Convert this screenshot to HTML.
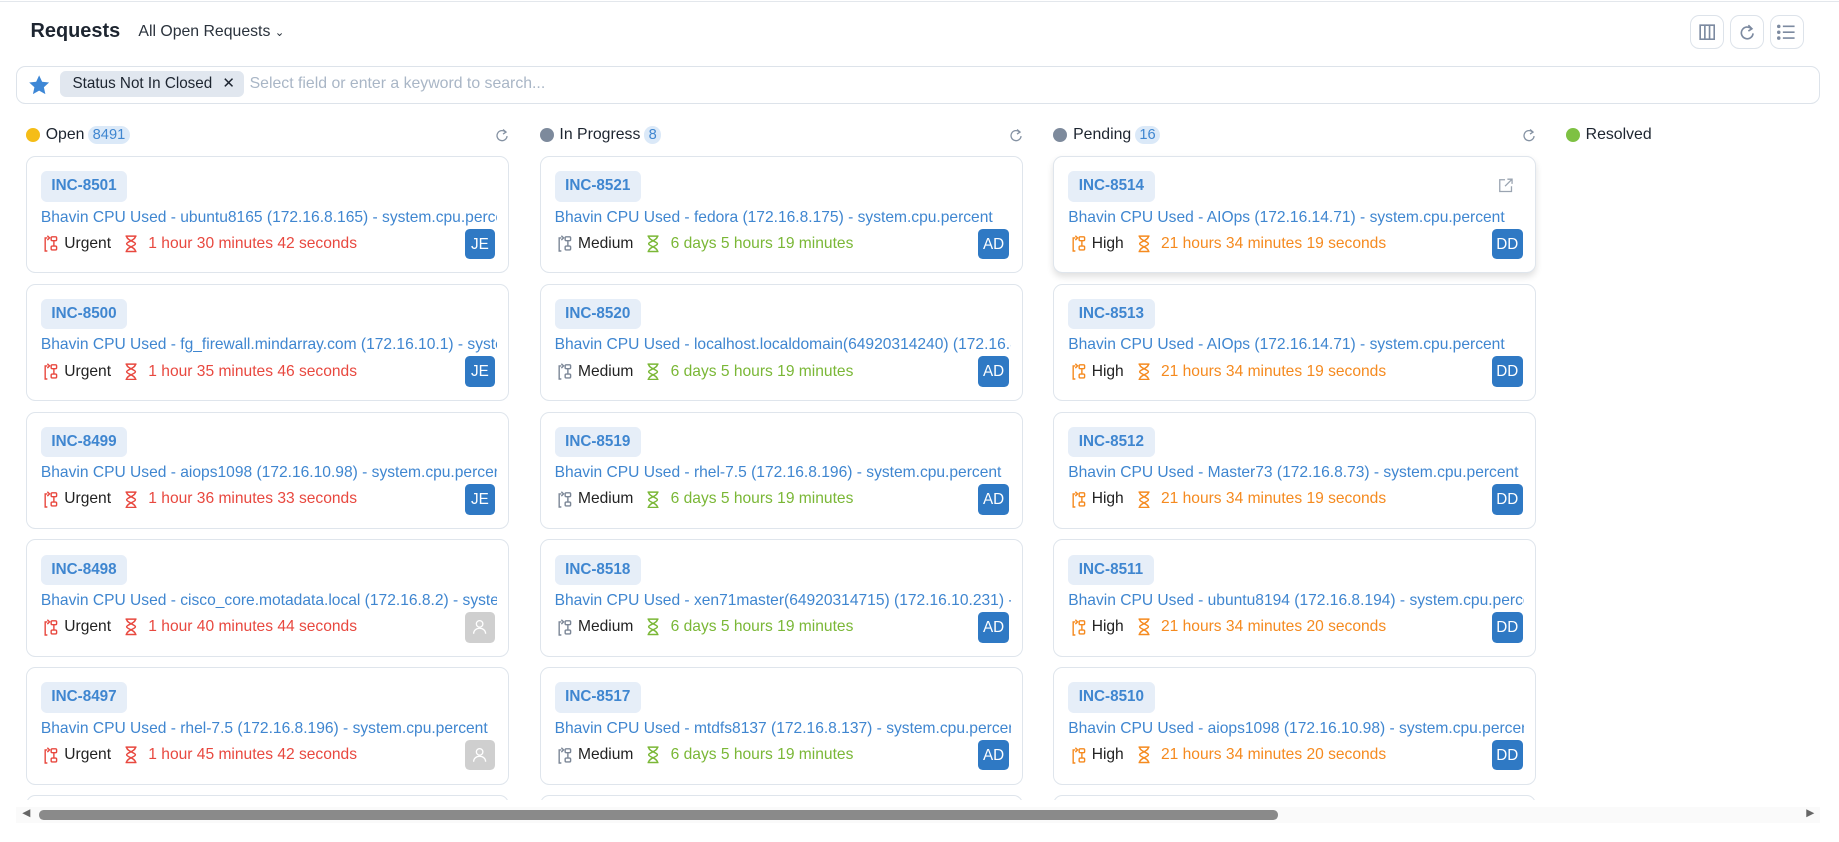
<!DOCTYPE html>
<html><head><meta charset="utf-8"><style>
html,body{margin:0;padding:0;overflow:hidden;background:#fff;height:842px}
body{width:1839px;height:842px;position:relative}
#w{zoom:1.17283;position:absolute;left:0;top:0;width:1568px;height:717px;font-family:"Liberation Sans",sans-serif;color:#222;overflow:hidden}
.top{position:absolute;left:0;right:0;top:1px;border-top:1px solid #e3e7ec}
.title{position:absolute;left:26px;top:17px;font-size:17px;font-weight:bold;color:#1d2530}
.view{position:absolute;left:118px;top:20px;font-size:13.5px;color:#2a323c}
.btn{position:absolute;top:13px;width:29px;height:29px;border:1px solid #dde3ea;border-radius:8px;box-sizing:border-box;display:flex;align-items:center;justify-content:center}
.search{position:absolute;left:14px;top:56px;width:1538px;height:33px;border:1px solid #dde3ea;border-radius:8px;box-sizing:border-box}
.chip{position:absolute;left:36px;top:4px;height:22px;width:157px;background:#e1e7ef;border-radius:5px;font-size:13px;line-height:22px;padding-left:11px;box-sizing:border-box;color:#1d2530}
.ph{position:absolute;left:198px;top:7px;font-size:13.5px;color:#a9b6c6}
.col{position:absolute;top:106px;width:412px}
.hd{height:18px;font-size:13.5px;display:flex;align-items:center;color:#1d2530}
.dot{width:12px;height:12px;border-radius:50%;margin-right:5px}
.bd{background:#dbe9f8;color:#3f86d0;border-radius:9px;padding:1px 4px;margin-left:3px;font-size:12.5px}
.rf{position:absolute;right:0;top:3px}
.card{position:absolute;left:0;width:412px;height:100px;border:1px solid #dfe5ec;border-radius:8px;box-sizing:border-box;background:#fff}
.id{position:absolute;left:12px;top:12px;height:26px;line-height:26px;padding:0 9px;background:#e6eef8;color:#3f86d0;border-radius:5px;font-size:13px;font-weight:bold}
.t{position:absolute;left:12px;top:44px;width:389px;white-space:nowrap;overflow:hidden;font-size:13.3px;color:#3f86d0}
.r{position:absolute;left:14px;top:66px;font-size:13.3px;display:flex;align-items:center;white-space:nowrap}
.r svg{margin-right:5px}
.av{position:absolute;right:11px;top:61px;width:26px;height:26px;border-radius:4px;background:#2f79c4;color:#fff;font-size:13px;line-height:27px;text-align:center}
.av.g{background:#cfcfcf}
.u{color:#e8483f}.m{color:#7ab736}.h{color:#f58a1f}
.sb{position:absolute;left:14px;top:688px;width:1538px;height:14px;background:#fafafa}
.th{position:absolute;left:19px;top:3px;width:1057px;height:8px;border-radius:4px;background:#8a8a8a}
</style></head><body><div id="w">
<div class="top"></div>
<div class="title">Requests</div>
<div class="view">All Open Requests <span style="font-size:10px">&#8964;</span></div>
<div class="btn" style="left:1441px"><svg width="14" height="14" viewBox="0 0 14 14" fill="none" stroke="#7c8aa0" stroke-width="1.4"><rect x="1" y="1" width="12" height="12"/><path d="M5 1v12M9 1v12"/></svg></div>
<div class="btn" style="left:1475px"><svg width="14" height="14" viewBox="0 0 14 14" fill="none" stroke="#7c8aa0" stroke-width="1.4"><path d="M10.5 4A5 5 0 1 0 12 8"/><path d="M8 1l3 3-3 2"/></svg></div>
<div class="btn" style="left:1509px"><svg width="16" height="14" viewBox="0 0 16 14" fill="none" stroke="#7c8aa0" stroke-width="1.4"><path d="M5 2h10M5 7h10M5 12h10"/><circle cx="1.5" cy="2" r=".8" fill="#7c8aa0"/><circle cx="1.5" cy="7" r=".8" fill="#7c8aa0"/><circle cx="1.5" cy="12" r=".8" fill="#7c8aa0"/></svg></div>
<div class="search">
<svg style="position:absolute;left:9px;top:6px" width="19" height="19" viewBox="0 0 24 24"><path fill="#3d87d6" d="M12 1.5l3.2 6.9 7.5.8-5.6 5.1 1.6 7.4L12 17.9l-6.7 3.8 1.6-7.4-5.6-5.1 7.5-.8z"/></svg>
<div class="chip">Status Not In Closed <span style="margin-left:5px">&#10005;</span></div>
<div class="ph">Select field or enter a keyword to search...</div>
</div>

<svg width="0" height="0" style="position:absolute"><defs>
<symbol id="pr" viewBox="0 0 14 16"><g fill="none" stroke-width="1.3"><path d="M4 3H2v12h2"/><path d="M4 1l2 2-2 2"/><rect x="7.5" y="2" width="5" height="3.5" rx="1"/><rect x="7.5" y="10.5" width="5" height="3.5" rx="1"/><path d="M10 5.5v5"/></g></symbol>
<symbol id="hg" viewBox="0 0 12 16"><g fill="none" stroke-width="1.3"><path d="M1 1h10M1 15h10M2 1c0 4 8 5 8 7s-8 3-8 7M10 1c0 4-8 5-8 7s8 3 8 7"/></g></symbol>
<symbol id="rf" viewBox="0 0 14 14"><g fill="none" stroke="#8592a3" stroke-width="1.3"><path d="M10.5 4A5 5 0 1 0 12 8"/><path d="M8 1.5l3 2.5-3 2"/></g></symbol>
<symbol id="us" viewBox="0 0 14 14"><g fill="none" stroke="#fff" stroke-width="1.2"><circle cx="7" cy="4.5" r="3"/><path d="M1.5 13.5c0-3 2.5-5 5.5-5s5.5 2 5.5 5"/></g></symbol>
</defs></svg>

<div class="col" style="left:22px">
<div class="hd"><span class="dot" style="background:#f5bd17"></span>Open<span class="bd">8491</span><svg class="rf" width="12" height="12"><use href="#rf"/></svg></div>
<div class="card" style="top:27px"><div class="id">INC-8501</div><div class="t">Bhavin CPU Used - ubuntu8165 (172.16.8.165) - system.cpu.percent</div><div class="r"><svg width="13" height="16" stroke="#e8483f"><use href="#pr"/></svg>Urgent&nbsp;&nbsp;&nbsp;<svg width="12" height="15" stroke="#e8483f"><use href="#hg"/></svg><span class="u">&nbsp;1 hour 30 minutes 42 seconds</span></div><div class="av">JE</div></div>
<div class="card" style="top:136px"><div class="id">INC-8500</div><div class="t">Bhavin CPU Used - fg_firewall.mindarray.com (172.16.10.1) - system.cpu.percent</div><div class="r"><svg width="13" height="16" stroke="#e8483f"><use href="#pr"/></svg>Urgent&nbsp;&nbsp;&nbsp;<svg width="12" height="15" stroke="#e8483f"><use href="#hg"/></svg><span class="u">&nbsp;1 hour 35 minutes 46 seconds</span></div><div class="av">JE</div></div>
<div class="card" style="top:245px"><div class="id">INC-8499</div><div class="t">Bhavin CPU Used - aiops1098 (172.16.10.98) - system.cpu.percent</div><div class="r"><svg width="13" height="16" stroke="#e8483f"><use href="#pr"/></svg>Urgent&nbsp;&nbsp;&nbsp;<svg width="12" height="15" stroke="#e8483f"><use href="#hg"/></svg><span class="u">&nbsp;1 hour 36 minutes 33 seconds</span></div><div class="av">JE</div></div>
<div class="card" style="top:354px"><div class="id">INC-8498</div><div class="t">Bhavin CPU Used - cisco_core.motadata.local (172.16.8.2) - system.cpu.percent</div><div class="r"><svg width="13" height="16" stroke="#e8483f"><use href="#pr"/></svg>Urgent&nbsp;&nbsp;&nbsp;<svg width="12" height="15" stroke="#e8483f"><use href="#hg"/></svg><span class="u">&nbsp;1 hour 40 minutes 44 seconds</span></div><div class="av g"><svg width="13" height="13" style="margin-top:6px"><use href="#us"/></svg></div></div>
<div class="card" style="top:463px"><div class="id">INC-8497</div><div class="t">Bhavin CPU Used - rhel-7.5 (172.16.8.196) - system.cpu.percent</div><div class="r"><svg width="13" height="16" stroke="#e8483f"><use href="#pr"/></svg>Urgent&nbsp;&nbsp;&nbsp;<svg width="12" height="15" stroke="#e8483f"><use href="#hg"/></svg><span class="u">&nbsp;1 hour 45 minutes 42 seconds</span></div><div class="av g"><svg width="13" height="13" style="margin-top:6px"><use href="#us"/></svg></div></div>
<div class="card" style="top:572px"></div>
</div>

<div class="col" style="left:460px">
<div class="hd"><span class="dot" style="background:#7d8a9c"></span>In Progress<span class="bd">8</span><svg class="rf" width="12" height="12"><use href="#rf"/></svg></div>
<div class="card" style="top:27px"><div class="id">INC-8521</div><div class="t">Bhavin CPU Used - fedora (172.16.8.175) - system.cpu.percent</div><div class="r"><svg width="13" height="16" stroke="#7c8797"><use href="#pr"/></svg>Medium&nbsp;&nbsp;&nbsp;<svg width="12" height="15" stroke="#7ab736"><use href="#hg"/></svg><span class="m">&nbsp;6 days 5 hours 19 minutes</span></div><div class="av">AD</div></div>
<div class="card" style="top:136px"><div class="id">INC-8520</div><div class="t">Bhavin CPU Used - localhost.localdomain(64920314240) (172.16.8.240) - system.cpu.percent</div><div class="r"><svg width="13" height="16" stroke="#7c8797"><use href="#pr"/></svg>Medium&nbsp;&nbsp;&nbsp;<svg width="12" height="15" stroke="#7ab736"><use href="#hg"/></svg><span class="m">&nbsp;6 days 5 hours 19 minutes</span></div><div class="av">AD</div></div>
<div class="card" style="top:245px"><div class="id">INC-8519</div><div class="t">Bhavin CPU Used - rhel-7.5 (172.16.8.196) - system.cpu.percent</div><div class="r"><svg width="13" height="16" stroke="#7c8797"><use href="#pr"/></svg>Medium&nbsp;&nbsp;&nbsp;<svg width="12" height="15" stroke="#7ab736"><use href="#hg"/></svg><span class="m">&nbsp;6 days 5 hours 19 minutes</span></div><div class="av">AD</div></div>
<div class="card" style="top:354px"><div class="id">INC-8518</div><div class="t">Bhavin CPU Used - xen71master(64920314715) (172.16.10.231) - system.cpu.percent</div><div class="r"><svg width="13" height="16" stroke="#7c8797"><use href="#pr"/></svg>Medium&nbsp;&nbsp;&nbsp;<svg width="12" height="15" stroke="#7ab736"><use href="#hg"/></svg><span class="m">&nbsp;6 days 5 hours 19 minutes</span></div><div class="av">AD</div></div>
<div class="card" style="top:463px"><div class="id">INC-8517</div><div class="t">Bhavin CPU Used - mtdfs8137 (172.16.8.137) - system.cpu.percent</div><div class="r"><svg width="13" height="16" stroke="#7c8797"><use href="#pr"/></svg>Medium&nbsp;&nbsp;&nbsp;<svg width="12" height="15" stroke="#7ab736"><use href="#hg"/></svg><span class="m">&nbsp;6 days 5 hours 19 minutes</span></div><div class="av">AD</div></div>
<div class="card" style="top:572px"></div>
</div>

<div class="col" style="left:898px">
<div class="hd"><span class="dot" style="background:#7d8a9c"></span>Pending<span class="bd">16</span><svg class="rf" width="12" height="12"><use href="#rf"/></svg></div>
<div class="card" style="top:27px;box-shadow:0 3px 6px rgba(0,0,0,.12)"><div class="id">INC-8514</div><svg style="position:absolute;right:19px;top:18px" width="13" height="13" viewBox="0 0 13 13" fill="none" stroke="#9aa4b1" stroke-width="1.1"><path d="M6 1.5H1.5v10h10V7M8 1h4v4M12 1L6 7"/></svg><div class="t">Bhavin CPU Used - AIOps (172.16.14.71) - system.cpu.percent</div><div class="r"><svg width="13" height="16" stroke="#f58a1f"><use href="#pr"/></svg>High&nbsp;&nbsp;&nbsp;<svg width="12" height="15" stroke="#f58a1f"><use href="#hg"/></svg><span class="h">&nbsp;21 hours 34 minutes 19 seconds</span></div><div class="av">DD</div></div>
<div class="card" style="top:136px"><div class="id">INC-8513</div><div class="t">Bhavin CPU Used - AIOps (172.16.14.71) - system.cpu.percent</div><div class="r"><svg width="13" height="16" stroke="#f58a1f"><use href="#pr"/></svg>High&nbsp;&nbsp;&nbsp;<svg width="12" height="15" stroke="#f58a1f"><use href="#hg"/></svg><span class="h">&nbsp;21 hours 34 minutes 19 seconds</span></div><div class="av">DD</div></div>
<div class="card" style="top:245px"><div class="id">INC-8512</div><div class="t">Bhavin CPU Used - Master73 (172.16.8.73) - system.cpu.percent</div><div class="r"><svg width="13" height="16" stroke="#f58a1f"><use href="#pr"/></svg>High&nbsp;&nbsp;&nbsp;<svg width="12" height="15" stroke="#f58a1f"><use href="#hg"/></svg><span class="h">&nbsp;21 hours 34 minutes 19 seconds</span></div><div class="av">DD</div></div>
<div class="card" style="top:354px"><div class="id">INC-8511</div><div class="t">Bhavin CPU Used - ubuntu8194 (172.16.8.194) - system.cpu.percent</div><div class="r"><svg width="13" height="16" stroke="#f58a1f"><use href="#pr"/></svg>High&nbsp;&nbsp;&nbsp;<svg width="12" height="15" stroke="#f58a1f"><use href="#hg"/></svg><span class="h">&nbsp;21 hours 34 minutes 20 seconds</span></div><div class="av">DD</div></div>
<div class="card" style="top:463px"><div class="id">INC-8510</div><div class="t">Bhavin CPU Used - aiops1098 (172.16.10.98) - system.cpu.percent</div><div class="r"><svg width="13" height="16" stroke="#f58a1f"><use href="#pr"/></svg>High&nbsp;&nbsp;&nbsp;<svg width="12" height="15" stroke="#f58a1f"><use href="#hg"/></svg><span class="h">&nbsp;21 hours 34 minutes 20 seconds</span></div><div class="av">DD</div></div>
<div class="card" style="top:572px"></div>
</div>

<div class="col" style="left:1335px">
<div class="hd"><span class="dot" style="background:#7ec143"></span>Resolved</div>
</div>

<div style="position:absolute;left:0;top:682px;width:1568px;height:36px;background:#fff"></div>
<div class="sb"><span style="position:absolute;left:5px;top:0;font-size:9px;color:#666">&#9664;</span><div class="th"></div><span style="position:absolute;right:5px;top:0;font-size:9px;color:#666">&#9654;</span></div>
</div></body></html>
